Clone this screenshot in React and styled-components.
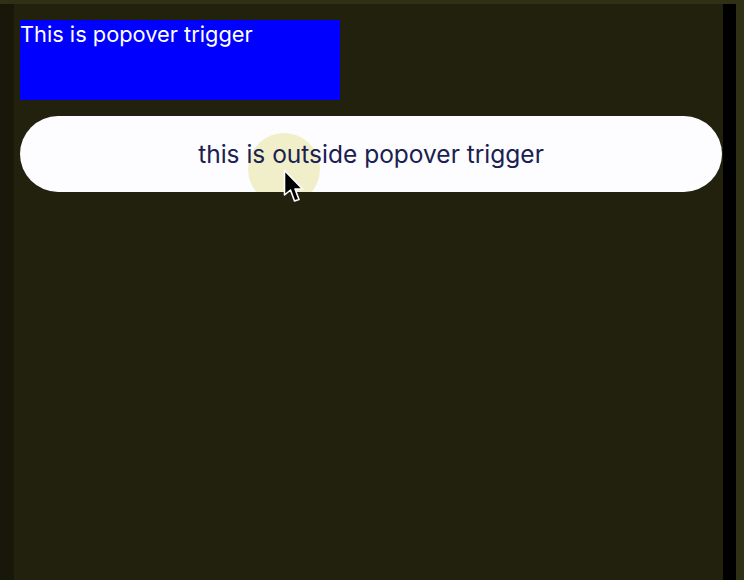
import React from 'react';
import styled, { createGlobalStyle } from 'styled-components';

const GlobalStyle = createGlobalStyle`
  html, body {
    margin: 0;
    padding: 0;
    background: #303014;
    font-family: Inter, "Liberation Sans", sans-serif;
  }
`;

const Frame = styled.div`
  display: flex;
  height: 580px;
  padding-top: 4px;
  box-sizing: border-box;
  background: #303014;
`;

const LeftEdge = styled.div`
  width: 14px;
  flex-shrink: 0;
  background: #17170a;
`;

const Main = styled.div`
  flex: 1;
  background: #21210d;
  padding: 16px 0 0 6px;
  display: flex;
  flex-direction: column;
  gap: 16px;
`;

const RightBar = styled.div`
  width: 13px;
  flex-shrink: 0;
  background: #000;
`;

const RightEdge = styled.div`
  width: 8px;
  flex-shrink: 0;
  background: #303014;
`;

const TriggerBox = styled.div`
  width: 320px;
  height: 80px;
  background: #0000ff;
  color: #fff;
  font-size: 21.8px;
  line-height: 28px;
`;

const ButtonWrap = styled.div`
  position: relative;
  width: 702px;
`;

const PillButton = styled.button`
  position: relative;
  overflow: hidden;
  width: 702px;
  height: 76px;
  border: none;
  border-radius: 38px;
  background: #fdfcff;
  color: #1a2050;
  font-family: Inter, "Liberation Sans", sans-serif;
  font-size: 24.5px;
  display: flex;
  align-items: center;
  justify-content: center;
  padding: 0;
`;

const ClickRing = styled.span`
  position: absolute;
  left: 228px;
  top: 17px;
  width: 72px;
  height: 72px;
  border-radius: 50%;
  background: rgba(215, 210, 90, 0.32);
  pointer-events: none;
`;

const Cursor = styled.svg`
  position: absolute;
  left: 263px;
  top: 53px;
  width: 22px;
  height: 36px;
`;

const Label = styled.span`
  position: relative;
`;

function App() {
  return (
    <>
      <GlobalStyle />
      <Frame>
        <LeftEdge />
        <Main>
          <TriggerBox>This is popover trigger</TriggerBox>
          <ButtonWrap>
            <PillButton>
              <ClickRing />
              <Label>this is outside popover trigger</Label>
            </PillButton>
            <Cursor viewBox="0 0 22 36">
              <path d="M1.5 1.5 L1.5 26 L7.5 21 L11.5 32 L16 30.5 L12 20 L19.5 20 Z" fill="#000" stroke="#fff" strokeWidth="1.6" strokeLinejoin="round" />
            </Cursor>
          </ButtonWrap>
        </Main>
        <RightBar />
        <RightEdge />
      </Frame>
    </>
  );
}

export default App;
